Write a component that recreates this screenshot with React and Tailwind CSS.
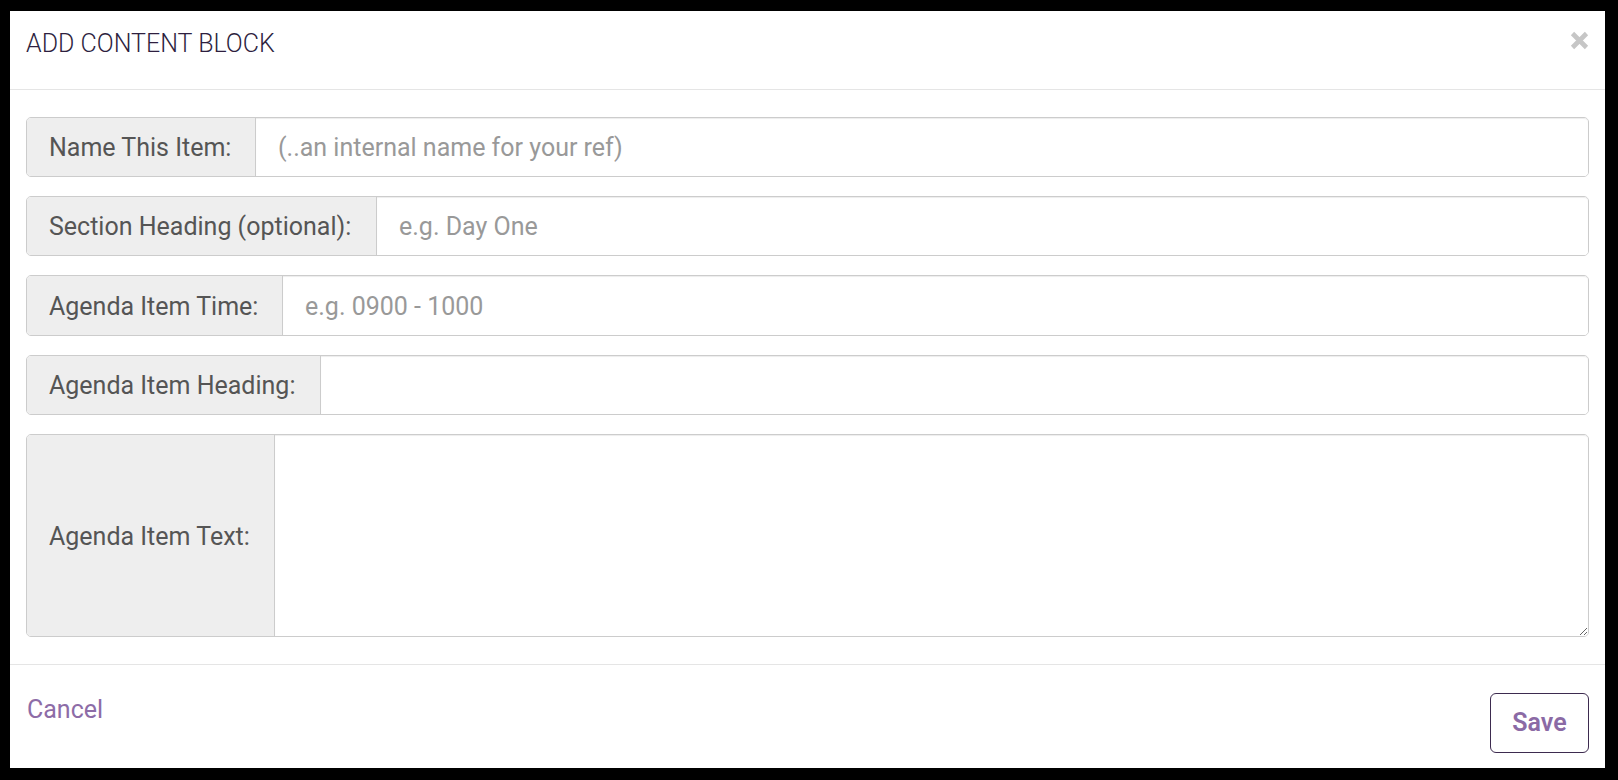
import React from 'react';

const rows = [
  { label: 'Name This Item:', width: 'w-[229px]', placeholder: '(..an internal name for your ref)', h: 'h-[60px]' },
  { label: 'Section Heading (optional):', width: 'w-[350px]', placeholder: 'e.g. Day One', h: 'h-[60px]' },
  { label: 'Agenda Item Time:', width: 'w-[256px]', placeholder: 'e.g. 0900 - 1000', h: 'h-[61px]' },
  { label: 'Agenda Item Heading:', width: 'w-[294px]', placeholder: '', h: 'h-[60px]' },
];

function CloseIcon() {
  return (
    <svg width="19" height="19" viewBox="0 0 19 19" aria-hidden="true">
      <path d="M2.5 2.5 L16.5 16.5 M16.5 2.5 L2.5 16.5" stroke="#c6c6c6" strokeWidth="4.6" strokeLinecap="butt" />
    </svg>
  );
}

export default function App() {
  return (
    <div className="h-[780px] w-full overflow-hidden bg-black pl-[10px] pt-[11px] font-['Roboto',sans-serif]">
      <div className="flex h-[757px] w-[1595px] flex-col bg-white">
        {/* Header */}
        <div className="flex h-[79px] shrink-0 items-start justify-between border-b border-[#e5e5e5] pl-4 pr-4 pt-[20px]">
          <h2 className="text-[25px] font-light leading-none text-[#2e1f3f]">ADD CONTENT BLOCK</h2>
          <button className="mt-[0px]" aria-label="Close">
            <CloseIcon />
          </button>
        </div>

        {/* Body */}
        <div className="flex flex-col gap-[19px] px-4 pb-[27px] pt-[27px]">
          {rows.map((row) => (
            <div key={row.label} className={`flex ${row.h} rounded-[5px] border border-[#cccccc]`}>
              <span
                className={`flex ${row.width} shrink-0 items-center rounded-l-[4px] border-r border-[#cccccc] bg-[#eeeeee] pl-[22px] pt-[2px] text-[25px] text-[#555555]`}
              >
                {row.label}
              </span>
              <input
                type="text"
                placeholder={row.placeholder}
                className="min-w-0 flex-1 rounded-r-[4px] bg-white px-[22px] pt-[2px] text-[25px] text-[#555555] shadow-[inset_0_1px_1px_rgba(0,0,0,0.075)] outline-none placeholder:text-[#999999]"
              />
            </div>
          ))}
          <div className="flex h-[203px] rounded-[5px] border border-[#cccccc]">
            <span className="flex w-[248px] shrink-0 items-center rounded-l-[4px] border-r border-[#cccccc] bg-[#eeeeee] pl-[22px] pt-[2px] text-[25px] text-[#555555]">
              Agenda Item Text:
            </span>
            <textarea className="min-w-0 flex-1 resize rounded-r-[4px] bg-white px-[22px] py-3 text-[25px] text-[#555555] shadow-[inset_0_1px_1px_rgba(0,0,0,0.075)] outline-none" />
          </div>
        </div>

        {/* Footer */}
        <div className="flex flex-1 items-start justify-between border-t border-[#e5e5e5] px-4 pt-[28px]">
          <a href="#" className="mt-[4px] pl-[1px] text-[25px] leading-none text-[#8d6ca7]">
            Cancel
          </a>
          <button className="flex h-[60px] w-[99px] items-center justify-center rounded-[6px] border border-[#3d2b4f] text-[25px] font-semibold text-[#8b6aa5]">
            Save
          </button>
        </div>
      </div>
    </div>
  );
}
